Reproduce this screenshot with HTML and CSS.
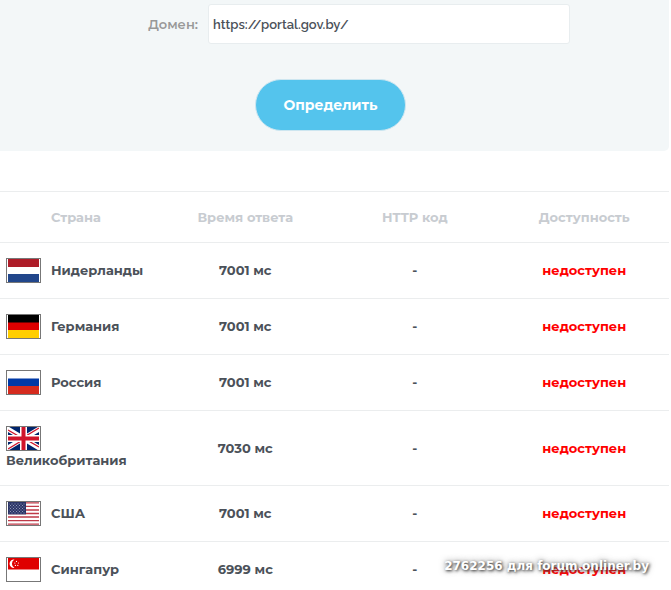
FILE: index.html
```html
<!DOCTYPE html>
<html lang="ru">
  <head>
    <meta charset="utf-8">
    <title>Доступность сайта</title>
    <meta name="viewport" content="width=device-width, initial-scale=1">
    <link rel="stylesheet" href="styles.css">
  </head>
  <body>
    <form class="check">
      <div class="field">
        <label for="domain">Домен:</label>
        <input type="text" id="domain" name="domain" value="https://portal.gov.by/">
      </div>
      <div class="actions">
        <button type="submit">Определить</button>
      </div>
    </form>
    <table class="results">
      <thead>
        <tr>
          <th class="country-head">Страна</th>
          <th>Время ответа</th>
          <th>HTTP код</th>
          <th>Доступность</th>
        </tr>
      </thead>
      <tbody>
        <tr>
          <td>
            <div class="country">
              <svg class="flag" viewBox="0 0 33 23">
                <rect x="1" width="31" height="8" fill="#ae1c28"/>
                <rect x="1" y="15" width="31" height="8" fill="#21468b"/>
              </svg>
              <span>Нидерланды</span>
            </div>
          </td>
          <td>7001 мс</td>
          <td>-</td>
          <td class="down">недоступен</td>
        </tr>
        <tr>
          <td>
            <div class="country">
              <svg class="flag" viewBox="0 0 33 23">
                <rect x="1" width="31" height="8" fill="#000"/>
                <rect x="1" y="7.5" width="31" height="8" fill="#d00"/>
                <rect x="1" y="15" width="31" height="8" fill="#ffce00"/>
              </svg>
              <span>Германия</span>
            </div>
          </td>
          <td>7001 мс</td>
          <td>-</td>
          <td class="down">недоступен</td>
        </tr>
        <tr>
          <td>
            <div class="country">
              <svg class="flag" viewBox="0 0 33 23">
                <rect x="1" y="7.5" width="31" height="8" fill="#0039a6"/>
                <rect x="1" y="15" width="31" height="8" fill="#d52b1e"/>
              </svg>
              <span>Россия</span>
            </div>
          </td>
          <td>7001 мс</td>
          <td>-</td>
          <td class="down">недоступен</td>
        </tr>
        <tr>
          <td>
            <div class="country">
              <svg class="flag" viewBox="0 0 33 23">
                <svg x="1" width="31" height="23" viewBox="0 0 31 23">
                  <rect width="31" height="23" fill="#00246b"/>
                  <path d="M-2 1L33 22M33 1L-2 22" stroke="#fff" stroke-width="5"/>
                  <path d="M0 3L13 10.5M31 20L18 12.5M31 1L17 9.5M0 22L14 13.5" stroke="#cf142b" stroke-width="1.4"/>
                  <path d="M15.5 0V23M0 11.5H31" stroke="#fff" stroke-width="7"/>
                  <path d="M15.5 0V23M0 11.5H31" stroke="#cf142b" stroke-width="4"/>
                </svg>
              </svg>
              <span>Великобритания</span>
            </div>
          </td>
          <td>7030 мс</td>
          <td>-</td>
          <td class="down">недоступен</td>
        </tr>
        <tr>
          <td>
            <div class="country">
              <svg class="flag" viewBox="0 0 33 23">
                <defs>
                  <pattern id="stars" width="3" height="3" patternUnits="userSpaceOnUse">
                    <rect width="1" height="1" fill="#8d94b3"/>
                    <rect x="1.5" y="1.5" width="1" height="1" fill="#8d94b3"/>
                  </pattern>
                </defs>
                <path d="M1 .9H32M1 4.4H32M1 8H32M1 11.5H32M1 15H32M1 18.6H32M1 22.1H32" stroke="#bf3a48" stroke-width="1.4"/>
                <rect x="1" width="18" height="12.4" fill="#2b3568"/>
                <rect x="2" y="1" width="16" height="11" fill="url(#stars)"/>
              </svg>
              <span>США</span>
            </div>
          </td>
          <td>7001 мс</td>
          <td>-</td>
          <td class="down">недоступен</td>
        </tr>
        <tr>
          <td>
            <div class="country">
              <svg class="flag" viewBox="0 0 33 23">
                <rect x="1" width="31" height="11.5" fill="#df0000"/>
                <path d="M7.5 1.5A4.3 4.3 0 1 0 7.5 10A4.8 4.8 0 0 1 7.5 1.5Z" fill="#fff"/>
                <g fill="#fff">
                  <circle cx="9.5" cy="3.4" r=".6"/>
                  <circle cx="7.8" cy="5" r=".6"/>
                  <circle cx="11.4" cy="5" r=".6"/>
                  <circle cx="8.4" cy="7.4" r=".6"/>
                  <circle cx="10.8" cy="7.4" r=".6"/>
                </g>
              </svg>
              <span>Сингапур</span>
            </div>
          </td>
          <td>6999 мс</td>
          <td>-</td>
          <td class="down">недоступен</td>
        </tr>
      </tbody>
    </table>
    <div class="watermark">2762256 для forum.onliner.by</div>
  </body>
</html>
```

FILE: styles.css
```css
* {
  box-sizing: border-box;
}
body {
  position: relative;
  height: 100vh;
  margin: 0;
  padding-right: 2px;
  overflow: hidden;
  background: #fff;
  color: #4b5159;
  font-family: Montserrat, Inter, "Open Sans", sans-serif;
  font-size: 13px;
  font-weight: 700;
  line-height: 19px;
}
.check {
  margin-bottom: 40px;
  padding: 4px 0 20px;
  background: #f3f7f8;
  border-radius: 0 0 5px 0;
}
.field {
  display: flex;
  align-items: center;
  gap: 10px;
  padding-right: 99px;
}
.field label {
  flex: 0 0 198px;
  color: #999;
  font-weight: 600;
  text-align: right;
}
.field input {
  flex: 1;
  min-width: 0;
  height: 40px;
  padding: 0 4px;
  border: 1px solid #e8edef;
  border-radius: 3px;
  background: #fff;
  color: #4b5159;
  font-family: Raleway, Montserrat, Inter, sans-serif;
  font-size: 13px;
  font-weight: 600;
}
.actions {
  padding: 35px 8px 0 0;
  text-align: center;
}
.actions button {
  display: inline-block;
  height: 52px;
  padding: 0 27px;
  border: 1px solid #cde6f0;
  border-radius: 26px;
  background: #54c4ed;
  color: #fff;
  font-family: inherit;
  font-size: 14px;
  font-weight: 700;
  vertical-align: top;
}
.results {
  width: 100%;
  border-collapse: separate;
  border-spacing: 0;
  border-top: 1px solid #ebedee;
  table-layout: fixed;
}
th,
td {
  padding: 15px 6px;
  border-bottom: 1px solid #ebedee;
  text-align: center;
}
th {
  padding: 16px 0 15px;
  color: #c8ccd1;
}
.country-head {
  width: 24%;
  padding-left: 51px;
  text-align: left;
}
.country {
  display: flex;
  flex-wrap: wrap;
  align-items: center;
  column-gap: 10px;
}
.flag {
  width: 35px;
  height: 25px;
  border: 1px solid #777;
}
.down {
  color: #f00;
}
.watermark {
  position: absolute;
  right: 22px;
  bottom: 14px;
  color: #fff;
  font-family: "DejaVu Sans", sans-serif;
  font-size: 12px;
  text-shadow: 1px 1px 3px #333, 0 0 6px #777;
}
```
